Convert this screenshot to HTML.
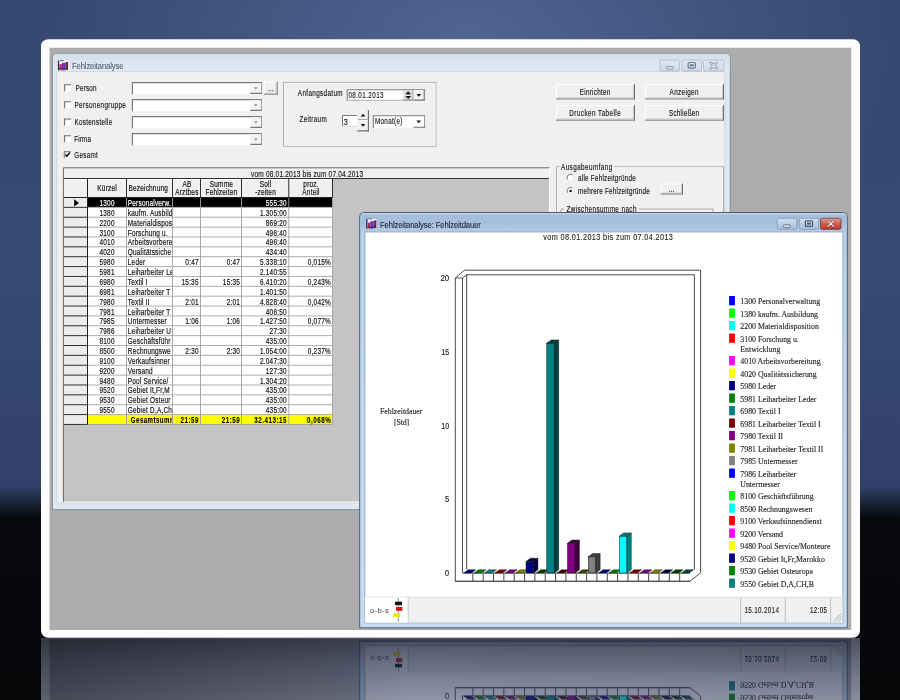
<!DOCTYPE html>
<html><head><meta charset="utf-8"><title>Fehlzeitanalyse</title>
<style>
html,body{margin:0;padding:0;width:900px;height:700px;overflow:hidden;background:#0a0b0f;font-family:"Liberation Sans",sans-serif;}
svg{display:block;will-change:transform;}

</style></head><body>
<svg width="900" height="700" viewBox="0 0 900 700">
<defs>
<linearGradient id="gBgV" x1="0" y1="0" x2="0" y2="1">
 <stop offset="0" stop-color="#36486f"/>
 <stop offset="0.4" stop-color="#384a72"/>
 <stop offset="0.695" stop-color="#31416a"/>
 <stop offset="0.74" stop-color="#08090d"/>
 <stop offset="1" stop-color="#060709"/>
</linearGradient>
<radialGradient id="gBgGlow" cx="470" cy="40" r="430" gradientUnits="userSpaceOnUse" gradientTransform="translate(470 40) scale(1 0.6) translate(-470 -40)">
 <stop offset="0" stop-color="#5a6e9e" stop-opacity="0.75"/>
 <stop offset="1" stop-color="#5a6e9e" stop-opacity="0"/>
</radialGradient>
<linearGradient id="gRefBg" x1="0" y1="0" x2="0" y2="1">
 <stop offset="0" stop-color="#1a1f2c"/>
 <stop offset="1" stop-color="#3a4258"/>
</linearGradient>
<linearGradient id="gRefFade" x1="0" y1="0" x2="0" y2="1">
 <stop offset="0" stop-color="#121a30" stop-opacity="0.6"/>
 <stop offset="0.4" stop-color="#1e2848" stop-opacity="0.45"/>
 <stop offset="1" stop-color="#2a3660" stop-opacity="0.26"/>
</linearGradient>
<linearGradient id="gRefH" x1="0" y1="0" x2="1" y2="0">
 <stop offset="0" stop-color="#000" stop-opacity="0.35"/>
 <stop offset="0.45" stop-color="#000" stop-opacity="0.0"/>
 <stop offset="1" stop-color="#000" stop-opacity="0.05"/>
</linearGradient>
<linearGradient id="gTitleI" x1="0" y1="0" x2="0" y2="1">
 <stop offset="0" stop-color="#d3dfec"/>
 <stop offset="1" stop-color="#e3ebf4"/>
</linearGradient>
<linearGradient id="gTitleA" x1="0" y1="0" x2="0" y2="1">
 <stop offset="0" stop-color="#c4d6ea"/>
 <stop offset="0.12" stop-color="#a6bfdb"/>
 <stop offset="0.5" stop-color="#a4bedb"/>
 <stop offset="1" stop-color="#b6cee8"/>
</linearGradient>
<linearGradient id="gFrameA" x1="0" y1="0" x2="0" y2="1">
 <stop offset="0" stop-color="#b8d0ea"/>
 <stop offset="0.5" stop-color="#c2d8ee"/>
 <stop offset="1" stop-color="#c8dcf0"/>
</linearGradient>
<linearGradient id="gBtnI" x1="0" y1="0" x2="0" y2="1">
 <stop offset="0" stop-color="#dfe7f0"/>
 <stop offset="1" stop-color="#cfdbe7"/>
</linearGradient>
<linearGradient id="gBtnA" x1="0" y1="0" x2="0" y2="1">
 <stop offset="0" stop-color="#d4e2f1"/>
 <stop offset="0.5" stop-color="#b9cde4"/>
 <stop offset="1" stop-color="#a9c1de"/>
</linearGradient>
<linearGradient id="gClose" x1="0" y1="0" x2="0" y2="1">
 <stop offset="0" stop-color="#e8a195"/>
 <stop offset="0.5" stop-color="#cf5c4d"/>
 <stop offset="1" stop-color="#c0392b"/>
</linearGradient>
<filter id="fBlur" x="0" y="0" width="1" height="1"><feGaussianBlur stdDeviation="0.7"/></filter>
<clipPath id="clipRef"><rect x="0" y="638.3" width="900" height="62"/></clipPath>
<clipPath id="clipPanel"><rect x="49.3" y="47.5" width="802.2" height="582.5"/></clipPath>
</defs>
<rect x="0" y="0" width="900" height="700" fill="url(#gBgV)"/>
<rect x="0" y="0" width="900" height="520" fill="url(#gBgGlow)"/>
<!-- reflection background -->
<rect x="41" y="638" width="819" height="62" fill="url(#gRefBg)"/>
<g clip-path="url(#clipRef)">
 <g transform="translate(0 1269) scale(1 -1)" opacity="0.62" filter="url(#fBlur)">
  <rect x="41" y="39.3" width="819" height="598.5" rx="7" fill="#fdfdfd"/>
  <use href="#content"/>
 </g>
 <rect x="41" y="638" width="819" height="62" fill="url(#gRefFade)"/>
 <rect x="41" y="638" width="819" height="62" fill="url(#gRefH)"/>
</g>
<!-- white frame -->
<rect x="41" y="39.3" width="819" height="598.5" rx="7" fill="#fdfdfd"/>
<g id="content" clip-path="url(#clipPanel)">
<rect x="49.30" y="47.50" width="802.20" height="582.50" fill="#acacac"/>
<path d="M52.5 509.6 V57.3 Q52.5 53.3 56.5 53.3 H726.2 Q730.2 53.3 730.2 57.3 V509.6 Z" fill="#dfe8f1" stroke="#7b8a99" stroke-width="0.9"/>
<rect x="53.1" y="53.9" width="676.5" height="18" rx="3.5" fill="url(#gTitleI)"/>
<rect x="57.20" y="71.80" width="667.20" height="430.80" fill="#f0f0f0"/>
<rect x="56.8" y="71.4" width="668" height="431.6" fill="none" stroke="#c9d4df" stroke-width="0.8"/>
<rect x="58.80" y="60.60" width="9.40" height="9.60" fill="#f4f4fa"/>
<rect x="57.90" y="60.50" width="1.30" height="10.00" fill="#28304e"/>
<rect x="60.00" y="60.10" width="3.80" height="1.00" fill="#5a6078"/>
<rect x="59.40" y="64.20" width="2.60" height="5.60" fill="#c42a5c"/>
<rect x="62.00" y="62.80" width="3.40" height="7.00" fill="#5a38e0"/>
<rect x="65.40" y="62.00" width="2.60" height="7.80" fill="#7a2a36"/>
<line x1="59.00" y1="68.90" x2="68.00" y2="68.90" stroke="#3a1a2a" stroke-width="0.9"/>
<rect x="60.50" y="69.60" width="5.00" height="0.90" fill="#6a6aa8"/>
<text transform="matrix(0.8600 0 0 1 72.00 68.60)" font-family="Liberation Sans" font-size="8.9" fill="#4a5a70" text-anchor="start" letter-spacing="-0.146" stroke="#4a5a70" stroke-width="0.06">Fehlzeitanalyse</text>
<rect x="660.00" y="60.00" width="19.5" height="11" rx="1.3" fill="url(#gBtnI)" stroke="#a9b8ca" stroke-width="0.8"/>
<rect x="666.25" y="66.70" width="7" height="2.3" rx="0.8" fill="#fff" stroke="#6c7a8c" stroke-width="0.9"/>
<rect x="682.00" y="60.00" width="19.5" height="11" rx="1.3" fill="url(#gBtnI)" stroke="#a9b8ca" stroke-width="0.8"/>
<rect x="688.15" y="62.50" width="7.2" height="5.6" rx="1" fill="none" stroke="#6c7a8c" stroke-width="1.2"/>
<rect x="689.75" y="64.30" width="4" height="2" fill="#6c7a8c"/>
<rect x="703.50" y="60.00" width="20.3" height="11" rx="1.3" fill="url(#gBtnI)" stroke="#a9b8ca" stroke-width="0.8"/>
<path d="M710.85 62.90 L716.45 68.10 M716.45 62.90 L710.85 68.10" stroke="#6a7a8e" stroke-width="2.4" stroke-linecap="round" opacity="0.95"/>
<path d="M710.85 62.90 L716.45 68.10 M716.45 62.90 L710.85 68.10" stroke="#f4f6f9" stroke-width="1.1" stroke-linecap="round"/>
<rect x="64.00" y="84.30" width="7.00" height="7.00" fill="#ffffff"/>
<path d="M64.50 91.30 V84.80 H71.00" stroke="#6e6e6e" stroke-width="1.1" fill="none"/>
<path d="M65.30 90.50 V85.60 H70.20" stroke="#d0d0d0" stroke-width="0.8" fill="none"/>
<text transform="matrix(0.7600 0 0 1 75.50 90.90)" font-family="Liberation Sans" font-size="8.3" fill="#111" text-anchor="start" letter-spacing="0.288" stroke="#111" stroke-width="0.13">Person</text>
<rect x="131.80" y="82.00" width="130.00" height="12.30" fill="#ffffff"/>
<path d="M132.40 94.30 V82.60 H261.80" stroke="#7a7a7a" stroke-width="1.2" fill="none"/>
<line x1="261.30" y1="82.00" x2="261.30" y2="93.70" stroke="#8a8a8a" stroke-width="1"/>
<rect x="250.30" y="83.20" width="10.50" height="10.10" fill="#f4f4f4"/>
<line x1="250.30" y1="93.40" x2="261.80" y2="93.40" stroke="#777" stroke-width="1.2"/>
<path d="M253.80 87.35 H257.80 L255.80 89.75 Z" fill="#9a9a9a"/>
<rect x="64.00" y="101.20" width="7.00" height="7.00" fill="#ffffff"/>
<path d="M64.50 108.20 V101.70 H71.00" stroke="#6e6e6e" stroke-width="1.1" fill="none"/>
<path d="M65.30 107.40 V102.50 H70.20" stroke="#d0d0d0" stroke-width="0.8" fill="none"/>
<text transform="matrix(0.7600 0 0 1 74.50 107.80)" font-family="Liberation Sans" font-size="8.3" fill="#111" text-anchor="start" letter-spacing="0.484" stroke="#111" stroke-width="0.13">Personengruppe</text>
<rect x="131.80" y="99.00" width="130.00" height="12.30" fill="#ffffff"/>
<path d="M132.40 111.30 V99.60 H261.80" stroke="#7a7a7a" stroke-width="1.2" fill="none"/>
<line x1="261.30" y1="99.00" x2="261.30" y2="110.70" stroke="#8a8a8a" stroke-width="1"/>
<rect x="250.30" y="100.20" width="10.50" height="10.10" fill="#f4f4f4"/>
<line x1="250.30" y1="110.40" x2="261.80" y2="110.40" stroke="#777" stroke-width="1.2"/>
<path d="M253.80 104.35 H257.80 L255.80 106.75 Z" fill="#9a9a9a"/>
<rect x="64.00" y="118.60" width="7.00" height="7.00" fill="#ffffff"/>
<path d="M64.50 125.60 V119.10 H71.00" stroke="#6e6e6e" stroke-width="1.1" fill="none"/>
<path d="M65.30 124.80 V119.90 H70.20" stroke="#d0d0d0" stroke-width="0.8" fill="none"/>
<text transform="matrix(0.7600 0 0 1 74.50 125.20)" font-family="Liberation Sans" font-size="8.3" fill="#111" text-anchor="start" letter-spacing="0.399" stroke="#111" stroke-width="0.13">Kostenstelle</text>
<rect x="131.80" y="116.00" width="130.00" height="12.30" fill="#ffffff"/>
<path d="M132.40 128.30 V116.60 H261.80" stroke="#7a7a7a" stroke-width="1.2" fill="none"/>
<line x1="261.30" y1="116.00" x2="261.30" y2="127.70" stroke="#8a8a8a" stroke-width="1"/>
<rect x="250.30" y="117.20" width="10.50" height="10.10" fill="#f4f4f4"/>
<line x1="250.30" y1="127.40" x2="261.80" y2="127.40" stroke="#777" stroke-width="1.2"/>
<path d="M253.80 121.35 H257.80 L255.80 123.75 Z" fill="#9a9a9a"/>
<rect x="64.00" y="135.30" width="7.00" height="7.00" fill="#ffffff"/>
<path d="M64.50 142.30 V135.80 H71.00" stroke="#6e6e6e" stroke-width="1.1" fill="none"/>
<path d="M65.30 141.50 V136.60 H70.20" stroke="#d0d0d0" stroke-width="0.8" fill="none"/>
<text transform="matrix(0.7600 0 0 1 74.20 141.90)" font-family="Liberation Sans" font-size="8.3" fill="#111" text-anchor="start" letter-spacing="0.232" stroke="#111" stroke-width="0.13">Firma</text>
<rect x="131.80" y="133.00" width="130.00" height="12.30" fill="#ffffff"/>
<path d="M132.40 145.30 V133.60 H261.80" stroke="#7a7a7a" stroke-width="1.2" fill="none"/>
<line x1="261.30" y1="133.00" x2="261.30" y2="144.70" stroke="#8a8a8a" stroke-width="1"/>
<rect x="250.30" y="134.20" width="10.50" height="10.10" fill="#f4f4f4"/>
<line x1="250.30" y1="144.40" x2="261.80" y2="144.40" stroke="#777" stroke-width="1.2"/>
<path d="M253.80 138.35 H257.80 L255.80 140.75 Z" fill="#9a9a9a"/>
<rect x="63.80" y="151.30" width="7.00" height="7.00" fill="#ffffff"/>
<path d="M64.30 158.30 V151.80 H70.80" stroke="#6e6e6e" stroke-width="1.1" fill="none"/>
<path d="M65.10 157.50 V152.60 H70.00" stroke="#d0d0d0" stroke-width="0.8" fill="none"/>
<path d="M65.30 154.50 L66.80 156.30 L70.00 152.50" stroke="#111" stroke-width="1.4" fill="none"/>
<text transform="matrix(0.7600 0 0 1 74.30 157.80)" font-family="Liberation Sans" font-size="8.3" fill="#111" text-anchor="start" letter-spacing="0.354" stroke="#111" stroke-width="0.13">Gesamt</text>
<rect x="264.00" y="81.50" width="13.70" height="13.20" fill="#f0f0f0"/>
<line x1="264.00" y1="82.00" x2="277.70" y2="82.00" stroke="#ffffff" stroke-width="1"/>
<line x1="264.50" y1="81.50" x2="264.50" y2="94.70" stroke="#ffffff" stroke-width="1"/>
<line x1="264.00" y1="94.20" x2="277.70" y2="94.20" stroke="#707070" stroke-width="1.0"/>
<line x1="277.20" y1="81.50" x2="277.20" y2="94.70" stroke="#707070" stroke-width="1.0"/>
<line x1="265.00" y1="93.20" x2="276.70" y2="93.20" stroke="#c4c4c4" stroke-width="0.9"/>
<line x1="276.20" y1="82.50" x2="276.20" y2="93.70" stroke="#c4c4c4" stroke-width="0.9"/>
<rect x="268.30" y="90.20" width="1.00" height="1.00" fill="#333"/>
<rect x="270.20" y="90.20" width="1.00" height="1.00" fill="#333"/>
<rect x="272.10" y="90.20" width="1.00" height="1.00" fill="#333"/>
<rect x="283.6" y="82.4" width="152.3" height="63.8" fill="none" stroke="#a0a0a0" stroke-width="0.9"/>
<rect x="284.4" y="83.2" width="150.7" height="62.2" fill="none" stroke="#fafafa" stroke-width="0.7"/>
<text transform="matrix(0.7600 0 0 1 297.80 96.20)" font-family="Liberation Sans" font-size="8.3" fill="#111" text-anchor="start" letter-spacing="0.496" stroke="#111" stroke-width="0.13">Anfangsdatum</text>
<rect x="346.70" y="89.20" width="78.20" height="11.40" fill="#ffffff"/>
<path d="M347.2 100.6 V89.7 H424.9" stroke="#7a7a7a" stroke-width="1.1" fill="none"/>
<path d="M346.7 100.3 H424.6 V89.2" stroke="#a8a8a8" stroke-width="0.9" fill="none"/>
<text transform="matrix(0.7600 0 0 1 348.40 98.20)" font-family="Liberation Sans" font-size="8.3" fill="#111" text-anchor="start" letter-spacing="0.530" stroke="#111" stroke-width="0.13">08.01.2013</text>
<rect x="403.00" y="90.00" width="10.30" height="10.00" fill="#dcdcdc"/>
<path d="M405.3 94.4 L408.2 91.2 L411.1 94.4 Z" fill="#111"/>
<path d="M405.3 95.9 L408.2 99.1 L411.1 95.9 Z" fill="#111"/>
<line x1="403.00" y1="95.15" x2="413.30" y2="95.15" stroke="#f4f4f4" stroke-width="0.8"/>
<line x1="413.00" y1="90.00" x2="413.00" y2="100.20" stroke="#8a8a8a" stroke-width="0.9"/>
<line x1="403.00" y1="99.90" x2="413.30" y2="99.90" stroke="#8a8a8a" stroke-width="0.9"/>
<rect x="413.60" y="90.00" width="10.80" height="10.00" fill="#f2f2f2"/>
<line x1="424.20" y1="89.50" x2="424.20" y2="100.40" stroke="#6e6e6e" stroke-width="1.0"/>
<line x1="413.60" y1="100.00" x2="424.60" y2="100.00" stroke="#6e6e6e" stroke-width="1.0"/>
<path d="M416.5 93.9 H421.1 L418.8 96.8 Z" fill="#111"/>
<text transform="matrix(0.7600 0 0 1 299.60 122.10)" font-family="Liberation Sans" font-size="8.3" fill="#111" text-anchor="start" letter-spacing="0.413" stroke="#111" stroke-width="0.13">Zeitraum</text>
<rect x="342.00" y="115.00" width="15.30" height="11.60" fill="#ffffff"/>
<path d="M342.5 126.6 V115.5 H357.3" stroke="#7a7a7a" stroke-width="1.1" fill="none"/>
<line x1="342.00" y1="126.20" x2="357.30" y2="126.20" stroke="#d0d0d0" stroke-width="0.8"/>
<text transform="matrix(0.9315 0 0 1 343.50 124.60)" font-family="Liberation Sans" font-size="8.3" fill="#111" text-anchor="start" stroke="#111" stroke-width="0.13">3</text>
<rect x="357.50" y="110.00" width="11.00" height="21.30" fill="#f0f0f0"/>
<line x1="368.40" y1="110.00" x2="368.40" y2="131.30" stroke="#6a6a6a" stroke-width="1.1"/>
<line x1="357.50" y1="130.90" x2="369.00" y2="130.90" stroke="#6a6a6a" stroke-width="1.1"/>
<line x1="358.00" y1="119.60" x2="368.00" y2="119.60" stroke="#9a9a9a" stroke-width="0.9"/>
<line x1="358.00" y1="120.60" x2="368.00" y2="120.60" stroke="#ffffff" stroke-width="0.7"/>
<path d="M360.7 116.6 L363 113.8 L365.3 116.6 Z" fill="#111"/>
<path d="M360.7 124 L363 126.8 L365.3 124 Z" fill="#111"/>
<rect x="372.80" y="115.30" width="52.20" height="12.40" fill="#ffffff"/>
<path d="M373.3 127.7 V115.8 H425" stroke="#7a7a7a" stroke-width="1.1" fill="none"/>
<line x1="424.60" y1="115.30" x2="424.60" y2="127.70" stroke="#8a8a8a" stroke-width="0.9"/>
<line x1="413.50" y1="127.20" x2="425.00" y2="127.20" stroke="#6a6a6a" stroke-width="1.1"/>
<text transform="matrix(0.7600 0 0 1 375.00 124.30)" font-family="Liberation Sans" font-size="8.3" fill="#111" text-anchor="start" letter-spacing="0.404" stroke="#111" stroke-width="0.13">Monat(e)</text>
<path d="M416.4 120.6 H421 L418.7 123.2 Z" fill="#111"/>
<rect x="556.00" y="84.00" width="79.00" height="15.40" fill="#f0f0f0"/>
<line x1="556.00" y1="84.50" x2="635.00" y2="84.50" stroke="#ffffff" stroke-width="1"/>
<line x1="556.50" y1="84.00" x2="556.50" y2="99.40" stroke="#ffffff" stroke-width="1"/>
<line x1="556.00" y1="98.90" x2="635.00" y2="98.90" stroke="#707070" stroke-width="1.0"/>
<line x1="634.50" y1="84.00" x2="634.50" y2="99.40" stroke="#707070" stroke-width="1.0"/>
<line x1="557.00" y1="97.90" x2="634.00" y2="97.90" stroke="#c4c4c4" stroke-width="0.9"/>
<line x1="633.50" y1="85.00" x2="633.50" y2="98.40" stroke="#c4c4c4" stroke-width="0.9"/>
<text transform="matrix(0.7600 0 0 1 595.13 94.70)" font-family="Liberation Sans" font-size="8.3" fill="#111" text-anchor="middle" letter-spacing="0.335" stroke="#111" stroke-width="0.13">Einrichten</text>
<rect x="556.00" y="105.00" width="79.00" height="15.60" fill="#f0f0f0"/>
<line x1="556.00" y1="105.50" x2="635.00" y2="105.50" stroke="#ffffff" stroke-width="1"/>
<line x1="556.50" y1="105.00" x2="556.50" y2="120.60" stroke="#ffffff" stroke-width="1"/>
<line x1="556.00" y1="120.10" x2="635.00" y2="120.10" stroke="#707070" stroke-width="1.0"/>
<line x1="634.50" y1="105.00" x2="634.50" y2="120.60" stroke="#707070" stroke-width="1.0"/>
<line x1="557.00" y1="119.10" x2="634.00" y2="119.10" stroke="#c4c4c4" stroke-width="0.9"/>
<line x1="633.50" y1="106.00" x2="633.50" y2="119.60" stroke="#c4c4c4" stroke-width="0.9"/>
<text transform="matrix(0.7600 0 0 1 595.23 115.80)" font-family="Liberation Sans" font-size="8.3" fill="#111" text-anchor="middle" letter-spacing="0.604" stroke="#111" stroke-width="0.13">Drucken Tabelle</text>
<rect x="645.00" y="84.00" width="79.00" height="15.40" fill="#f0f0f0"/>
<line x1="645.00" y1="84.50" x2="724.00" y2="84.50" stroke="#ffffff" stroke-width="1"/>
<line x1="645.50" y1="84.00" x2="645.50" y2="99.40" stroke="#ffffff" stroke-width="1"/>
<line x1="645.00" y1="98.90" x2="724.00" y2="98.90" stroke="#707070" stroke-width="1.0"/>
<line x1="723.50" y1="84.00" x2="723.50" y2="99.40" stroke="#707070" stroke-width="1.0"/>
<line x1="646.00" y1="97.90" x2="723.00" y2="97.90" stroke="#c4c4c4" stroke-width="0.9"/>
<line x1="722.50" y1="85.00" x2="722.50" y2="98.40" stroke="#c4c4c4" stroke-width="0.9"/>
<text transform="matrix(0.7600 0 0 1 684.18 94.70)" font-family="Liberation Sans" font-size="8.3" fill="#111" text-anchor="middle" letter-spacing="0.476" stroke="#111" stroke-width="0.13">Anzeigen</text>
<rect x="645.00" y="105.00" width="79.00" height="15.60" fill="#f0f0f0"/>
<line x1="645.00" y1="105.50" x2="724.00" y2="105.50" stroke="#ffffff" stroke-width="1"/>
<line x1="645.50" y1="105.00" x2="645.50" y2="120.60" stroke="#ffffff" stroke-width="1"/>
<line x1="645.00" y1="120.10" x2="724.00" y2="120.10" stroke="#707070" stroke-width="1.0"/>
<line x1="723.50" y1="105.00" x2="723.50" y2="120.60" stroke="#707070" stroke-width="1.0"/>
<line x1="646.00" y1="119.10" x2="723.00" y2="119.10" stroke="#c4c4c4" stroke-width="0.9"/>
<line x1="722.50" y1="106.00" x2="722.50" y2="119.60" stroke="#c4c4c4" stroke-width="0.9"/>
<text transform="matrix(0.7600 0 0 1 684.13 115.80)" font-family="Liberation Sans" font-size="8.3" fill="#111" text-anchor="middle" letter-spacing="0.343" stroke="#111" stroke-width="0.13">Schließen</text>
<path d="M560 166.8 H556.6 V520 M614 166.8 H723.6 V520" stroke="#a0a0a0" stroke-width="0.9" fill="none"/>
<path d="M557.5 520 V167.6 H560 M614 167.6 H722.7" stroke="#fafafa" stroke-width="0.7" fill="none"/>
<text transform="matrix(0.7600 0 0 1 561.00 169.80)" font-family="Liberation Sans" font-size="8.3" fill="#111" text-anchor="start" letter-spacing="0.593" stroke="#111" stroke-width="0.13">Ausgabeumfang</text>
<circle cx="570.4" cy="177.6" r="3.4" fill="#fff" stroke="#e4e4e4" stroke-width="0.8"/>
<path d="M567.6 179.4 A3.4 3.4 0 0 1 572.4 174.79999999999998" stroke="#6a6a6a" stroke-width="0.9" fill="none"/>
<circle cx="570.4" cy="190.9" r="3.4" fill="#fff" stroke="#e4e4e4" stroke-width="0.8"/>
<path d="M567.6 192.70000000000002 A3.4 3.4 0 0 1 572.4 188.1" stroke="#6a6a6a" stroke-width="0.9" fill="none"/>
<circle cx="570.6" cy="191.0" r="1.3" fill="#111"/>
<text transform="matrix(0.7600 0 0 1 578.00 180.80)" font-family="Liberation Sans" font-size="8.3" fill="#111" text-anchor="start" letter-spacing="0.325" stroke="#111" stroke-width="0.13">alle Fehlzeitgründe</text>
<text transform="matrix(0.7600 0 0 1 578.00 194.20)" font-family="Liberation Sans" font-size="8.3" fill="#111" text-anchor="start" letter-spacing="0.301" stroke="#111" stroke-width="0.13">mehrere Fehlzeitgründe</text>
<rect x="660.70" y="183.50" width="22.30" height="11.00" fill="#f0f0f0"/>
<line x1="660.70" y1="184.00" x2="683.00" y2="184.00" stroke="#ffffff" stroke-width="1"/>
<line x1="661.20" y1="183.50" x2="661.20" y2="194.50" stroke="#ffffff" stroke-width="1"/>
<line x1="660.70" y1="194.00" x2="683.00" y2="194.00" stroke="#707070" stroke-width="1.0"/>
<line x1="682.50" y1="183.50" x2="682.50" y2="194.50" stroke="#707070" stroke-width="1.0"/>
<line x1="661.70" y1="193.00" x2="682.00" y2="193.00" stroke="#c4c4c4" stroke-width="0.9"/>
<line x1="681.50" y1="184.50" x2="681.50" y2="193.50" stroke="#c4c4c4" stroke-width="0.9"/>
<rect x="669.00" y="190.80" width="1.00" height="1.00" fill="#333"/>
<rect x="671.00" y="190.80" width="1.00" height="1.00" fill="#333"/>
<rect x="673.00" y="190.80" width="1.00" height="1.00" fill="#333"/>
<path d="M564 209 H561 V240 M639 209 H713 V240" stroke="#a0a0a0" stroke-width="0.9" fill="none"/>
<text transform="matrix(0.7600 0 0 1 566.40 211.60)" font-family="Liberation Sans" font-size="8.3" fill="#111" text-anchor="start" letter-spacing="0.573" stroke="#111" stroke-width="0.13">Zwischensumme nach</text>
<rect x="63.40" y="167.80" width="486.60" height="334.80" fill="#c4c4c4"/>
<rect x="63.40" y="167.80" width="486.60" height="10.70" fill="#f0f0f0"/>
<text transform="matrix(0.7600 0 0 1 307.10 176.60)" font-family="Liberation Sans" font-size="8.6" fill="#111" text-anchor="middle" letter-spacing="0.270" stroke="#111" stroke-width="0.13">vom 08.01.2013 bis zum 07.04.2013</text>
<rect x="63.40" y="178.50" width="269.10" height="19.00" fill="#f0f0f0"/>
<text transform="matrix(0.7000 0 0 1 107.11 190.80)" font-family="Liberation Sans" font-size="9.2" fill="#111" text-anchor="middle" letter-spacing="0.300" stroke="#111" stroke-width="0.2">Kürzel</text>
<text transform="matrix(0.7000 0 0 1 128.50 190.80)" font-family="Liberation Sans" font-size="9.2" fill="#111" text-anchor="start" letter-spacing="0.300" stroke="#111" stroke-width="0.2">Bezeichnung</text>
<text transform="matrix(0.7000 0 0 1 186.91 187.10)" font-family="Liberation Sans" font-size="9.2" fill="#111" text-anchor="middle" letter-spacing="0.300" stroke="#111" stroke-width="0.2">AB</text>
<text transform="matrix(0.7000 0 0 1 186.91 195.30)" font-family="Liberation Sans" font-size="9.2" fill="#111" text-anchor="middle" letter-spacing="0.300" stroke="#111" stroke-width="0.2">Arztbes</text>
<text transform="matrix(0.7000 0 0 1 221.41 187.10)" font-family="Liberation Sans" font-size="9.2" fill="#111" text-anchor="middle" letter-spacing="0.300" stroke="#111" stroke-width="0.2">Summe</text>
<text transform="matrix(0.7000 0 0 1 221.41 195.30)" font-family="Liberation Sans" font-size="9.2" fill="#111" text-anchor="middle" letter-spacing="0.300" stroke="#111" stroke-width="0.2">Fehlzeiten</text>
<text transform="matrix(0.7000 0 0 1 265.53 187.10)" font-family="Liberation Sans" font-size="9.2" fill="#111" text-anchor="middle" letter-spacing="0.300" stroke="#111" stroke-width="0.2">Soll</text>
<text transform="matrix(0.7000 0 0 1 265.53 195.30)" font-family="Liberation Sans" font-size="9.2" fill="#111" text-anchor="middle" letter-spacing="0.300" stroke="#111" stroke-width="0.2">-zeiten</text>
<text transform="matrix(0.7000 0 0 1 311.03 187.10)" font-family="Liberation Sans" font-size="9.2" fill="#111" text-anchor="middle" letter-spacing="0.300" stroke="#111" stroke-width="0.2">proz.</text>
<text transform="matrix(0.7000 0 0 1 311.03 195.30)" font-family="Liberation Sans" font-size="9.2" fill="#111" text-anchor="middle" letter-spacing="0.300" stroke="#111" stroke-width="0.2">Anteil</text>
<rect x="63.40" y="197.50" width="24.10" height="9.87" fill="#ececec"/>
<rect x="87.50" y="197.50" width="245.00" height="9.87" fill="#000"/>
<rect x="63.40" y="207.37" width="24.10" height="9.87" fill="#ececec"/>
<rect x="87.50" y="207.37" width="245.00" height="9.87" fill="#ffffff"/>
<rect x="63.40" y="217.23" width="24.10" height="9.87" fill="#ececec"/>
<rect x="87.50" y="217.23" width="245.00" height="9.87" fill="#ffffff"/>
<rect x="63.40" y="227.10" width="24.10" height="9.87" fill="#ececec"/>
<rect x="87.50" y="227.10" width="245.00" height="9.87" fill="#ffffff"/>
<rect x="63.40" y="236.97" width="24.10" height="9.87" fill="#ececec"/>
<rect x="87.50" y="236.97" width="245.00" height="9.87" fill="#ffffff"/>
<rect x="63.40" y="246.84" width="24.10" height="9.87" fill="#ececec"/>
<rect x="87.50" y="246.84" width="245.00" height="9.87" fill="#ffffff"/>
<rect x="63.40" y="256.70" width="24.10" height="9.87" fill="#ececec"/>
<rect x="87.50" y="256.70" width="245.00" height="9.87" fill="#ffffff"/>
<rect x="63.40" y="266.57" width="24.10" height="9.87" fill="#ececec"/>
<rect x="87.50" y="266.57" width="245.00" height="9.87" fill="#ffffff"/>
<rect x="63.40" y="276.44" width="24.10" height="9.87" fill="#ececec"/>
<rect x="87.50" y="276.44" width="245.00" height="9.87" fill="#ffffff"/>
<rect x="63.40" y="286.30" width="24.10" height="9.87" fill="#ececec"/>
<rect x="87.50" y="286.30" width="245.00" height="9.87" fill="#ffffff"/>
<rect x="63.40" y="296.17" width="24.10" height="9.87" fill="#ececec"/>
<rect x="87.50" y="296.17" width="245.00" height="9.87" fill="#ffffff"/>
<rect x="63.40" y="306.04" width="24.10" height="9.87" fill="#ececec"/>
<rect x="87.50" y="306.04" width="245.00" height="9.87" fill="#ffffff"/>
<rect x="63.40" y="315.90" width="24.10" height="9.87" fill="#ececec"/>
<rect x="87.50" y="315.90" width="245.00" height="9.87" fill="#ffffff"/>
<rect x="63.40" y="325.77" width="24.10" height="9.87" fill="#ececec"/>
<rect x="87.50" y="325.77" width="245.00" height="9.87" fill="#ffffff"/>
<rect x="63.40" y="335.64" width="24.10" height="9.87" fill="#ececec"/>
<rect x="87.50" y="335.64" width="245.00" height="9.87" fill="#ffffff"/>
<rect x="63.40" y="345.50" width="24.10" height="9.87" fill="#ececec"/>
<rect x="87.50" y="345.50" width="245.00" height="9.87" fill="#ffffff"/>
<rect x="63.40" y="355.37" width="24.10" height="9.87" fill="#ececec"/>
<rect x="87.50" y="355.37" width="245.00" height="9.87" fill="#ffffff"/>
<rect x="63.40" y="365.24" width="24.10" height="9.87" fill="#ececec"/>
<rect x="87.50" y="365.24" width="245.00" height="9.87" fill="#ffffff"/>
<rect x="63.40" y="375.11" width="24.10" height="9.87" fill="#ececec"/>
<rect x="87.50" y="375.11" width="245.00" height="9.87" fill="#ffffff"/>
<rect x="63.40" y="384.97" width="24.10" height="9.87" fill="#ececec"/>
<rect x="87.50" y="384.97" width="245.00" height="9.87" fill="#ffffff"/>
<rect x="63.40" y="394.84" width="24.10" height="9.87" fill="#ececec"/>
<rect x="87.50" y="394.84" width="245.00" height="9.87" fill="#ffffff"/>
<rect x="63.40" y="404.71" width="24.10" height="9.87" fill="#ececec"/>
<rect x="87.50" y="404.71" width="245.00" height="9.87" fill="#ffffff"/>
<rect x="63.40" y="414.57" width="24.10" height="9.87" fill="#ececec"/>
<rect x="87.50" y="414.57" width="245.00" height="9.87" fill="#ffff00"/>
<line x1="87.50" y1="207.37" x2="332.50" y2="207.37" stroke="#a8a8a8" stroke-width="0.9"/>
<line x1="87.50" y1="217.23" x2="332.50" y2="217.23" stroke="#a8a8a8" stroke-width="0.9"/>
<line x1="87.50" y1="227.10" x2="332.50" y2="227.10" stroke="#a8a8a8" stroke-width="0.9"/>
<line x1="87.50" y1="236.97" x2="332.50" y2="236.97" stroke="#a8a8a8" stroke-width="0.9"/>
<line x1="87.50" y1="246.84" x2="332.50" y2="246.84" stroke="#a8a8a8" stroke-width="0.9"/>
<line x1="87.50" y1="256.70" x2="332.50" y2="256.70" stroke="#a8a8a8" stroke-width="0.9"/>
<line x1="87.50" y1="266.57" x2="332.50" y2="266.57" stroke="#a8a8a8" stroke-width="0.9"/>
<line x1="87.50" y1="276.44" x2="332.50" y2="276.44" stroke="#a8a8a8" stroke-width="0.9"/>
<line x1="87.50" y1="286.30" x2="332.50" y2="286.30" stroke="#a8a8a8" stroke-width="0.9"/>
<line x1="87.50" y1="296.17" x2="332.50" y2="296.17" stroke="#a8a8a8" stroke-width="0.9"/>
<line x1="87.50" y1="306.04" x2="332.50" y2="306.04" stroke="#a8a8a8" stroke-width="0.9"/>
<line x1="87.50" y1="315.90" x2="332.50" y2="315.90" stroke="#a8a8a8" stroke-width="0.9"/>
<line x1="87.50" y1="325.77" x2="332.50" y2="325.77" stroke="#a8a8a8" stroke-width="0.9"/>
<line x1="87.50" y1="335.64" x2="332.50" y2="335.64" stroke="#a8a8a8" stroke-width="0.9"/>
<line x1="87.50" y1="345.50" x2="332.50" y2="345.50" stroke="#a8a8a8" stroke-width="0.9"/>
<line x1="87.50" y1="355.37" x2="332.50" y2="355.37" stroke="#a8a8a8" stroke-width="0.9"/>
<line x1="87.50" y1="365.24" x2="332.50" y2="365.24" stroke="#a8a8a8" stroke-width="0.9"/>
<line x1="87.50" y1="375.11" x2="332.50" y2="375.11" stroke="#a8a8a8" stroke-width="0.9"/>
<line x1="87.50" y1="384.97" x2="332.50" y2="384.97" stroke="#a8a8a8" stroke-width="0.9"/>
<line x1="87.50" y1="394.84" x2="332.50" y2="394.84" stroke="#a8a8a8" stroke-width="0.9"/>
<line x1="87.50" y1="404.71" x2="332.50" y2="404.71" stroke="#a8a8a8" stroke-width="0.9"/>
<line x1="87.50" y1="414.57" x2="332.50" y2="414.57" stroke="#a8a8a8" stroke-width="0.9"/>
<line x1="63.40" y1="197.50" x2="87.50" y2="197.50" stroke="#303030" stroke-width="1.0"/>
<line x1="63.40" y1="207.37" x2="87.50" y2="207.37" stroke="#303030" stroke-width="1.0"/>
<line x1="63.40" y1="217.23" x2="87.50" y2="217.23" stroke="#303030" stroke-width="1.0"/>
<line x1="63.40" y1="227.10" x2="87.50" y2="227.10" stroke="#303030" stroke-width="1.0"/>
<line x1="63.40" y1="236.97" x2="87.50" y2="236.97" stroke="#303030" stroke-width="1.0"/>
<line x1="63.40" y1="246.84" x2="87.50" y2="246.84" stroke="#303030" stroke-width="1.0"/>
<line x1="63.40" y1="256.70" x2="87.50" y2="256.70" stroke="#303030" stroke-width="1.0"/>
<line x1="63.40" y1="266.57" x2="87.50" y2="266.57" stroke="#303030" stroke-width="1.0"/>
<line x1="63.40" y1="276.44" x2="87.50" y2="276.44" stroke="#303030" stroke-width="1.0"/>
<line x1="63.40" y1="286.30" x2="87.50" y2="286.30" stroke="#303030" stroke-width="1.0"/>
<line x1="63.40" y1="296.17" x2="87.50" y2="296.17" stroke="#303030" stroke-width="1.0"/>
<line x1="63.40" y1="306.04" x2="87.50" y2="306.04" stroke="#303030" stroke-width="1.0"/>
<line x1="63.40" y1="315.90" x2="87.50" y2="315.90" stroke="#303030" stroke-width="1.0"/>
<line x1="63.40" y1="325.77" x2="87.50" y2="325.77" stroke="#303030" stroke-width="1.0"/>
<line x1="63.40" y1="335.64" x2="87.50" y2="335.64" stroke="#303030" stroke-width="1.0"/>
<line x1="63.40" y1="345.50" x2="87.50" y2="345.50" stroke="#303030" stroke-width="1.0"/>
<line x1="63.40" y1="355.37" x2="87.50" y2="355.37" stroke="#303030" stroke-width="1.0"/>
<line x1="63.40" y1="365.24" x2="87.50" y2="365.24" stroke="#303030" stroke-width="1.0"/>
<line x1="63.40" y1="375.11" x2="87.50" y2="375.11" stroke="#303030" stroke-width="1.0"/>
<line x1="63.40" y1="384.97" x2="87.50" y2="384.97" stroke="#303030" stroke-width="1.0"/>
<line x1="63.40" y1="394.84" x2="87.50" y2="394.84" stroke="#303030" stroke-width="1.0"/>
<line x1="63.40" y1="404.71" x2="87.50" y2="404.71" stroke="#303030" stroke-width="1.0"/>
<line x1="63.40" y1="414.57" x2="87.50" y2="414.57" stroke="#303030" stroke-width="1.0"/>
<line x1="63.40" y1="424.44" x2="87.50" y2="424.44" stroke="#303030" stroke-width="1.0"/>
<line x1="87.50" y1="424.44" x2="332.50" y2="424.44" stroke="#9a9a9a" stroke-width="0.9"/>
<line x1="126.50" y1="197.50" x2="126.50" y2="424.44" stroke="#a0a0a0" stroke-width="0.9"/>
<line x1="172.50" y1="197.50" x2="172.50" y2="424.44" stroke="#a0a0a0" stroke-width="0.9"/>
<line x1="200.50" y1="197.50" x2="200.50" y2="424.44" stroke="#a0a0a0" stroke-width="0.9"/>
<line x1="241.50" y1="197.50" x2="241.50" y2="424.44" stroke="#a0a0a0" stroke-width="0.9"/>
<line x1="288.75" y1="197.50" x2="288.75" y2="424.44" stroke="#a0a0a0" stroke-width="0.9"/>
<line x1="332.50" y1="197.50" x2="332.50" y2="424.44" stroke="#a0a0a0" stroke-width="0.9"/>
<line x1="87.50" y1="178.50" x2="87.50" y2="424.44" stroke="#202020" stroke-width="1.0"/>
<line x1="126.50" y1="178.50" x2="126.50" y2="197.50" stroke="#303030" stroke-width="1.0"/>
<line x1="172.50" y1="178.50" x2="172.50" y2="197.50" stroke="#303030" stroke-width="1.0"/>
<line x1="200.50" y1="178.50" x2="200.50" y2="197.50" stroke="#303030" stroke-width="1.0"/>
<line x1="241.50" y1="178.50" x2="241.50" y2="197.50" stroke="#303030" stroke-width="1.0"/>
<line x1="288.75" y1="178.50" x2="288.75" y2="197.50" stroke="#303030" stroke-width="1.0"/>
<line x1="332.50" y1="178.50" x2="332.50" y2="197.50" stroke="#303030" stroke-width="1.0"/>
<line x1="63.40" y1="197.50" x2="332.50" y2="197.50" stroke="#202020" stroke-width="1.1"/>
<line x1="63.40" y1="178.50" x2="550.00" y2="178.50" stroke="#303030" stroke-width="1.0"/>
<line x1="64.50" y1="179.60" x2="86.50" y2="179.60" stroke="#ffffff" stroke-width="0.8"/>
<line x1="88.50" y1="179.60" x2="125.50" y2="179.60" stroke="#ffffff" stroke-width="0.8"/>
<line x1="127.50" y1="179.60" x2="171.50" y2="179.60" stroke="#ffffff" stroke-width="0.8"/>
<line x1="173.50" y1="179.60" x2="199.50" y2="179.60" stroke="#ffffff" stroke-width="0.8"/>
<line x1="201.50" y1="179.60" x2="240.50" y2="179.60" stroke="#ffffff" stroke-width="0.8"/>
<line x1="242.50" y1="179.60" x2="287.75" y2="179.60" stroke="#ffffff" stroke-width="0.8"/>
<line x1="289.75" y1="179.60" x2="331.50" y2="179.60" stroke="#ffffff" stroke-width="0.8"/>
<path d="M74.2 199.30 L79 202.90 L74.2 206.50 Z" fill="#000"/>
<text transform="matrix(0.7000 0 0 1 107.11 206.00)" font-family="Liberation Sans" font-size="9.2" fill="#fff" text-anchor="middle" letter-spacing="0.300" stroke="#fff" stroke-width="0.2">1300</text>
<clipPath id="cb0"><rect x="126.5" y="197.0" width="45.5" height="11"/></clipPath>
<g clip-path="url(#cb0)">
<text transform="matrix(0.7000 0 0 1 127.80 206.00)" font-family="Liberation Sans" font-size="9.2" fill="#fff" text-anchor="start" letter-spacing="0.300" stroke="#fff" stroke-width="0.2">Personalverw.</text>
</g>
<text transform="matrix(0.7000 0 0 1 286.76 206.00)" font-family="Liberation Sans" font-size="9.2" fill="#fff" text-anchor="end" letter-spacing="0.300" stroke="#fff" stroke-width="0.2">555:30</text>
<text transform="matrix(0.7000 0 0 1 107.11 215.87)" font-family="Liberation Sans" font-size="9.2" fill="#111" text-anchor="middle" letter-spacing="0.300" stroke="#111" stroke-width="0.2">1380</text>
<clipPath id="cb1"><rect x="126.5" y="206.867" width="45.5" height="11"/></clipPath>
<g clip-path="url(#cb1)">
<text transform="matrix(0.7000 0 0 1 127.80 215.87)" font-family="Liberation Sans" font-size="9.2" fill="#111" text-anchor="start" letter-spacing="0.300" stroke="#111" stroke-width="0.2">kaufm. Ausbild</text>
</g>
<text transform="matrix(0.7000 0 0 1 286.76 215.87)" font-family="Liberation Sans" font-size="9.2" fill="#111" text-anchor="end" letter-spacing="0.300" stroke="#111" stroke-width="0.2">1.305:00</text>
<text transform="matrix(0.7000 0 0 1 107.11 225.73)" font-family="Liberation Sans" font-size="9.2" fill="#111" text-anchor="middle" letter-spacing="0.300" stroke="#111" stroke-width="0.2">2200</text>
<clipPath id="cb2"><rect x="126.5" y="216.734" width="45.5" height="11"/></clipPath>
<g clip-path="url(#cb2)">
<text transform="matrix(0.7000 0 0 1 127.80 225.73)" font-family="Liberation Sans" font-size="9.2" fill="#111" text-anchor="start" letter-spacing="0.300" stroke="#111" stroke-width="0.2">Materialdispos</text>
</g>
<text transform="matrix(0.7000 0 0 1 286.76 225.73)" font-family="Liberation Sans" font-size="9.2" fill="#111" text-anchor="end" letter-spacing="0.300" stroke="#111" stroke-width="0.2">869:20</text>
<text transform="matrix(0.7000 0 0 1 107.11 235.60)" font-family="Liberation Sans" font-size="9.2" fill="#111" text-anchor="middle" letter-spacing="0.300" stroke="#111" stroke-width="0.2">3100</text>
<clipPath id="cb3"><rect x="126.5" y="226.601" width="45.5" height="11"/></clipPath>
<g clip-path="url(#cb3)">
<text transform="matrix(0.7000 0 0 1 127.80 235.60)" font-family="Liberation Sans" font-size="9.2" fill="#111" text-anchor="start" letter-spacing="0.300" stroke="#111" stroke-width="0.2">Forschung u.</text>
</g>
<text transform="matrix(0.7000 0 0 1 286.76 235.60)" font-family="Liberation Sans" font-size="9.2" fill="#111" text-anchor="end" letter-spacing="0.300" stroke="#111" stroke-width="0.2">496:40</text>
<text transform="matrix(0.7000 0 0 1 107.11 245.47)" font-family="Liberation Sans" font-size="9.2" fill="#111" text-anchor="middle" letter-spacing="0.300" stroke="#111" stroke-width="0.2">4010</text>
<clipPath id="cb4"><rect x="126.5" y="236.46800000000002" width="45.5" height="11"/></clipPath>
<g clip-path="url(#cb4)">
<text transform="matrix(0.7000 0 0 1 127.80 245.47)" font-family="Liberation Sans" font-size="9.2" fill="#111" text-anchor="start" letter-spacing="0.300" stroke="#111" stroke-width="0.2">Arbeitsvorbere</text>
</g>
<text transform="matrix(0.7000 0 0 1 286.76 245.47)" font-family="Liberation Sans" font-size="9.2" fill="#111" text-anchor="end" letter-spacing="0.300" stroke="#111" stroke-width="0.2">496:40</text>
<text transform="matrix(0.7000 0 0 1 107.11 255.34)" font-family="Liberation Sans" font-size="9.2" fill="#111" text-anchor="middle" letter-spacing="0.300" stroke="#111" stroke-width="0.2">4020</text>
<clipPath id="cb5"><rect x="126.5" y="246.335" width="45.5" height="11"/></clipPath>
<g clip-path="url(#cb5)">
<text transform="matrix(0.7000 0 0 1 127.80 255.34)" font-family="Liberation Sans" font-size="9.2" fill="#111" text-anchor="start" letter-spacing="0.300" stroke="#111" stroke-width="0.2">Qualitätssiche</text>
</g>
<text transform="matrix(0.7000 0 0 1 286.76 255.34)" font-family="Liberation Sans" font-size="9.2" fill="#111" text-anchor="end" letter-spacing="0.300" stroke="#111" stroke-width="0.2">434:40</text>
<text transform="matrix(0.7000 0 0 1 107.11 265.20)" font-family="Liberation Sans" font-size="9.2" fill="#111" text-anchor="middle" letter-spacing="0.300" stroke="#111" stroke-width="0.2">5980</text>
<clipPath id="cb6"><rect x="126.5" y="256.202" width="45.5" height="11"/></clipPath>
<g clip-path="url(#cb6)">
<text transform="matrix(0.7000 0 0 1 127.80 265.20)" font-family="Liberation Sans" font-size="9.2" fill="#111" text-anchor="start" letter-spacing="0.300" stroke="#111" stroke-width="0.2">Leder</text>
</g>
<text transform="matrix(0.7000 0 0 1 198.71 265.20)" font-family="Liberation Sans" font-size="9.2" fill="#111" text-anchor="end" letter-spacing="0.300" stroke="#111" stroke-width="0.2">0:47</text>
<text transform="matrix(0.7000 0 0 1 240.01 265.20)" font-family="Liberation Sans" font-size="9.2" fill="#111" text-anchor="end" letter-spacing="0.300" stroke="#111" stroke-width="0.2">0:47</text>
<text transform="matrix(0.7000 0 0 1 286.76 265.20)" font-family="Liberation Sans" font-size="9.2" fill="#111" text-anchor="end" letter-spacing="0.300" stroke="#111" stroke-width="0.2">5.338:10</text>
<text transform="matrix(0.7000 0 0 1 330.91 265.20)" font-family="Liberation Sans" font-size="9.2" fill="#111" text-anchor="end" letter-spacing="0.300" stroke="#111" stroke-width="0.2">0,015%</text>
<text transform="matrix(0.7000 0 0 1 107.11 275.07)" font-family="Liberation Sans" font-size="9.2" fill="#111" text-anchor="middle" letter-spacing="0.300" stroke="#111" stroke-width="0.2">5981</text>
<clipPath id="cb7"><rect x="126.5" y="266.069" width="45.5" height="11"/></clipPath>
<g clip-path="url(#cb7)">
<text transform="matrix(0.7000 0 0 1 127.80 275.07)" font-family="Liberation Sans" font-size="9.2" fill="#111" text-anchor="start" letter-spacing="0.300" stroke="#111" stroke-width="0.2">Leiharbeiter Le</text>
</g>
<text transform="matrix(0.7000 0 0 1 286.76 275.07)" font-family="Liberation Sans" font-size="9.2" fill="#111" text-anchor="end" letter-spacing="0.300" stroke="#111" stroke-width="0.2">2.140:55</text>
<text transform="matrix(0.7000 0 0 1 107.11 284.94)" font-family="Liberation Sans" font-size="9.2" fill="#111" text-anchor="middle" letter-spacing="0.300" stroke="#111" stroke-width="0.2">6980</text>
<clipPath id="cb8"><rect x="126.5" y="275.93600000000004" width="45.5" height="11"/></clipPath>
<g clip-path="url(#cb8)">
<text transform="matrix(0.7000 0 0 1 127.80 284.94)" font-family="Liberation Sans" font-size="9.2" fill="#111" text-anchor="start" letter-spacing="0.300" stroke="#111" stroke-width="0.2">Textil I</text>
</g>
<text transform="matrix(0.7000 0 0 1 198.71 284.94)" font-family="Liberation Sans" font-size="9.2" fill="#111" text-anchor="end" letter-spacing="0.300" stroke="#111" stroke-width="0.2">15:35</text>
<text transform="matrix(0.7000 0 0 1 240.01 284.94)" font-family="Liberation Sans" font-size="9.2" fill="#111" text-anchor="end" letter-spacing="0.300" stroke="#111" stroke-width="0.2">15:35</text>
<text transform="matrix(0.7000 0 0 1 286.76 284.94)" font-family="Liberation Sans" font-size="9.2" fill="#111" text-anchor="end" letter-spacing="0.300" stroke="#111" stroke-width="0.2">6.410:20</text>
<text transform="matrix(0.7000 0 0 1 330.91 284.94)" font-family="Liberation Sans" font-size="9.2" fill="#111" text-anchor="end" letter-spacing="0.300" stroke="#111" stroke-width="0.2">0,243%</text>
<text transform="matrix(0.7000 0 0 1 107.11 294.80)" font-family="Liberation Sans" font-size="9.2" fill="#111" text-anchor="middle" letter-spacing="0.300" stroke="#111" stroke-width="0.2">6981</text>
<clipPath id="cb9"><rect x="126.5" y="285.803" width="45.5" height="11"/></clipPath>
<g clip-path="url(#cb9)">
<text transform="matrix(0.7000 0 0 1 127.80 294.80)" font-family="Liberation Sans" font-size="9.2" fill="#111" text-anchor="start" letter-spacing="0.300" stroke="#111" stroke-width="0.2">Leiharbeiter T</text>
</g>
<text transform="matrix(0.7000 0 0 1 286.76 294.80)" font-family="Liberation Sans" font-size="9.2" fill="#111" text-anchor="end" letter-spacing="0.300" stroke="#111" stroke-width="0.2">1.401:50</text>
<text transform="matrix(0.7000 0 0 1 107.11 304.67)" font-family="Liberation Sans" font-size="9.2" fill="#111" text-anchor="middle" letter-spacing="0.300" stroke="#111" stroke-width="0.2">7980</text>
<clipPath id="cb10"><rect x="126.5" y="295.67" width="45.5" height="11"/></clipPath>
<g clip-path="url(#cb10)">
<text transform="matrix(0.7000 0 0 1 127.80 304.67)" font-family="Liberation Sans" font-size="9.2" fill="#111" text-anchor="start" letter-spacing="0.300" stroke="#111" stroke-width="0.2">Textil II</text>
</g>
<text transform="matrix(0.7000 0 0 1 198.71 304.67)" font-family="Liberation Sans" font-size="9.2" fill="#111" text-anchor="end" letter-spacing="0.300" stroke="#111" stroke-width="0.2">2:01</text>
<text transform="matrix(0.7000 0 0 1 240.01 304.67)" font-family="Liberation Sans" font-size="9.2" fill="#111" text-anchor="end" letter-spacing="0.300" stroke="#111" stroke-width="0.2">2:01</text>
<text transform="matrix(0.7000 0 0 1 286.76 304.67)" font-family="Liberation Sans" font-size="9.2" fill="#111" text-anchor="end" letter-spacing="0.300" stroke="#111" stroke-width="0.2">4.828:40</text>
<text transform="matrix(0.7000 0 0 1 330.91 304.67)" font-family="Liberation Sans" font-size="9.2" fill="#111" text-anchor="end" letter-spacing="0.300" stroke="#111" stroke-width="0.2">0,042%</text>
<text transform="matrix(0.7000 0 0 1 107.11 314.54)" font-family="Liberation Sans" font-size="9.2" fill="#111" text-anchor="middle" letter-spacing="0.300" stroke="#111" stroke-width="0.2">7981</text>
<clipPath id="cb11"><rect x="126.5" y="305.53700000000003" width="45.5" height="11"/></clipPath>
<g clip-path="url(#cb11)">
<text transform="matrix(0.7000 0 0 1 127.80 314.54)" font-family="Liberation Sans" font-size="9.2" fill="#111" text-anchor="start" letter-spacing="0.300" stroke="#111" stroke-width="0.2">Leiharbeiter T</text>
</g>
<text transform="matrix(0.7000 0 0 1 286.76 314.54)" font-family="Liberation Sans" font-size="9.2" fill="#111" text-anchor="end" letter-spacing="0.300" stroke="#111" stroke-width="0.2">406:50</text>
<text transform="matrix(0.7000 0 0 1 107.11 324.40)" font-family="Liberation Sans" font-size="9.2" fill="#111" text-anchor="middle" letter-spacing="0.300" stroke="#111" stroke-width="0.2">7985</text>
<clipPath id="cb12"><rect x="126.5" y="315.404" width="45.5" height="11"/></clipPath>
<g clip-path="url(#cb12)">
<text transform="matrix(0.7000 0 0 1 127.80 324.40)" font-family="Liberation Sans" font-size="9.2" fill="#111" text-anchor="start" letter-spacing="0.300" stroke="#111" stroke-width="0.2">Untermesser</text>
</g>
<text transform="matrix(0.7000 0 0 1 198.71 324.40)" font-family="Liberation Sans" font-size="9.2" fill="#111" text-anchor="end" letter-spacing="0.300" stroke="#111" stroke-width="0.2">1:06</text>
<text transform="matrix(0.7000 0 0 1 240.01 324.40)" font-family="Liberation Sans" font-size="9.2" fill="#111" text-anchor="end" letter-spacing="0.300" stroke="#111" stroke-width="0.2">1:06</text>
<text transform="matrix(0.7000 0 0 1 286.76 324.40)" font-family="Liberation Sans" font-size="9.2" fill="#111" text-anchor="end" letter-spacing="0.300" stroke="#111" stroke-width="0.2">1.427:50</text>
<text transform="matrix(0.7000 0 0 1 330.91 324.40)" font-family="Liberation Sans" font-size="9.2" fill="#111" text-anchor="end" letter-spacing="0.300" stroke="#111" stroke-width="0.2">0,077%</text>
<text transform="matrix(0.7000 0 0 1 107.11 334.27)" font-family="Liberation Sans" font-size="9.2" fill="#111" text-anchor="middle" letter-spacing="0.300" stroke="#111" stroke-width="0.2">7986</text>
<clipPath id="cb13"><rect x="126.5" y="325.271" width="45.5" height="11"/></clipPath>
<g clip-path="url(#cb13)">
<text transform="matrix(0.7000 0 0 1 127.80 334.27)" font-family="Liberation Sans" font-size="9.2" fill="#111" text-anchor="start" letter-spacing="0.300" stroke="#111" stroke-width="0.2">Leiharbeiter U</text>
</g>
<text transform="matrix(0.7000 0 0 1 286.76 334.27)" font-family="Liberation Sans" font-size="9.2" fill="#111" text-anchor="end" letter-spacing="0.300" stroke="#111" stroke-width="0.2">27:30</text>
<text transform="matrix(0.7000 0 0 1 107.11 344.14)" font-family="Liberation Sans" font-size="9.2" fill="#111" text-anchor="middle" letter-spacing="0.300" stroke="#111" stroke-width="0.2">8100</text>
<clipPath id="cb14"><rect x="126.5" y="335.13800000000003" width="45.5" height="11"/></clipPath>
<g clip-path="url(#cb14)">
<text transform="matrix(0.7000 0 0 1 127.80 344.14)" font-family="Liberation Sans" font-size="9.2" fill="#111" text-anchor="start" letter-spacing="0.300" stroke="#111" stroke-width="0.2">Geschäftsführ</text>
</g>
<text transform="matrix(0.7000 0 0 1 286.76 344.14)" font-family="Liberation Sans" font-size="9.2" fill="#111" text-anchor="end" letter-spacing="0.300" stroke="#111" stroke-width="0.2">435:00</text>
<text transform="matrix(0.7000 0 0 1 107.11 354.00)" font-family="Liberation Sans" font-size="9.2" fill="#111" text-anchor="middle" letter-spacing="0.300" stroke="#111" stroke-width="0.2">8500</text>
<clipPath id="cb15"><rect x="126.5" y="345.005" width="45.5" height="11"/></clipPath>
<g clip-path="url(#cb15)">
<text transform="matrix(0.7000 0 0 1 127.80 354.00)" font-family="Liberation Sans" font-size="9.2" fill="#111" text-anchor="start" letter-spacing="0.300" stroke="#111" stroke-width="0.2">Rechnungswe</text>
</g>
<text transform="matrix(0.7000 0 0 1 198.71 354.00)" font-family="Liberation Sans" font-size="9.2" fill="#111" text-anchor="end" letter-spacing="0.300" stroke="#111" stroke-width="0.2">2:30</text>
<text transform="matrix(0.7000 0 0 1 240.01 354.00)" font-family="Liberation Sans" font-size="9.2" fill="#111" text-anchor="end" letter-spacing="0.300" stroke="#111" stroke-width="0.2">2:30</text>
<text transform="matrix(0.7000 0 0 1 286.76 354.00)" font-family="Liberation Sans" font-size="9.2" fill="#111" text-anchor="end" letter-spacing="0.300" stroke="#111" stroke-width="0.2">1.054:00</text>
<text transform="matrix(0.7000 0 0 1 330.91 354.00)" font-family="Liberation Sans" font-size="9.2" fill="#111" text-anchor="end" letter-spacing="0.300" stroke="#111" stroke-width="0.2">0,237%</text>
<text transform="matrix(0.7000 0 0 1 107.11 363.87)" font-family="Liberation Sans" font-size="9.2" fill="#111" text-anchor="middle" letter-spacing="0.300" stroke="#111" stroke-width="0.2">9100</text>
<clipPath id="cb16"><rect x="126.5" y="354.872" width="45.5" height="11"/></clipPath>
<g clip-path="url(#cb16)">
<text transform="matrix(0.7000 0 0 1 127.80 363.87)" font-family="Liberation Sans" font-size="9.2" fill="#111" text-anchor="start" letter-spacing="0.300" stroke="#111" stroke-width="0.2">Verkaufsinner</text>
</g>
<text transform="matrix(0.7000 0 0 1 286.76 363.87)" font-family="Liberation Sans" font-size="9.2" fill="#111" text-anchor="end" letter-spacing="0.300" stroke="#111" stroke-width="0.2">2.047:30</text>
<text transform="matrix(0.7000 0 0 1 107.11 373.74)" font-family="Liberation Sans" font-size="9.2" fill="#111" text-anchor="middle" letter-spacing="0.300" stroke="#111" stroke-width="0.2">9200</text>
<clipPath id="cb17"><rect x="126.5" y="364.73900000000003" width="45.5" height="11"/></clipPath>
<g clip-path="url(#cb17)">
<text transform="matrix(0.7000 0 0 1 127.80 373.74)" font-family="Liberation Sans" font-size="9.2" fill="#111" text-anchor="start" letter-spacing="0.300" stroke="#111" stroke-width="0.2">Versand</text>
</g>
<text transform="matrix(0.7000 0 0 1 286.76 373.74)" font-family="Liberation Sans" font-size="9.2" fill="#111" text-anchor="end" letter-spacing="0.300" stroke="#111" stroke-width="0.2">127:30</text>
<text transform="matrix(0.7000 0 0 1 107.11 383.61)" font-family="Liberation Sans" font-size="9.2" fill="#111" text-anchor="middle" letter-spacing="0.300" stroke="#111" stroke-width="0.2">9480</text>
<clipPath id="cb18"><rect x="126.5" y="374.606" width="45.5" height="11"/></clipPath>
<g clip-path="url(#cb18)">
<text transform="matrix(0.7000 0 0 1 127.80 383.61)" font-family="Liberation Sans" font-size="9.2" fill="#111" text-anchor="start" letter-spacing="0.300" stroke="#111" stroke-width="0.2">Pool Service/</text>
</g>
<text transform="matrix(0.7000 0 0 1 286.76 383.61)" font-family="Liberation Sans" font-size="9.2" fill="#111" text-anchor="end" letter-spacing="0.300" stroke="#111" stroke-width="0.2">1.304:20</text>
<text transform="matrix(0.7000 0 0 1 107.11 393.47)" font-family="Liberation Sans" font-size="9.2" fill="#111" text-anchor="middle" letter-spacing="0.300" stroke="#111" stroke-width="0.2">9520</text>
<clipPath id="cb19"><rect x="126.5" y="384.473" width="45.5" height="11"/></clipPath>
<g clip-path="url(#cb19)">
<text transform="matrix(0.7000 0 0 1 127.80 393.47)" font-family="Liberation Sans" font-size="9.2" fill="#111" text-anchor="start" letter-spacing="0.300" stroke="#111" stroke-width="0.2">Gebiet It,Fr,M</text>
</g>
<text transform="matrix(0.7000 0 0 1 286.76 393.47)" font-family="Liberation Sans" font-size="9.2" fill="#111" text-anchor="end" letter-spacing="0.300" stroke="#111" stroke-width="0.2">435:00</text>
<text transform="matrix(0.7000 0 0 1 107.11 403.34)" font-family="Liberation Sans" font-size="9.2" fill="#111" text-anchor="middle" letter-spacing="0.300" stroke="#111" stroke-width="0.2">9530</text>
<clipPath id="cb20"><rect x="126.5" y="394.34000000000003" width="45.5" height="11"/></clipPath>
<g clip-path="url(#cb20)">
<text transform="matrix(0.7000 0 0 1 127.80 403.34)" font-family="Liberation Sans" font-size="9.2" fill="#111" text-anchor="start" letter-spacing="0.300" stroke="#111" stroke-width="0.2">Gebiet Osteur</text>
</g>
<text transform="matrix(0.7000 0 0 1 286.76 403.34)" font-family="Liberation Sans" font-size="9.2" fill="#111" text-anchor="end" letter-spacing="0.300" stroke="#111" stroke-width="0.2">435:00</text>
<text transform="matrix(0.7000 0 0 1 107.11 413.21)" font-family="Liberation Sans" font-size="9.2" fill="#111" text-anchor="middle" letter-spacing="0.300" stroke="#111" stroke-width="0.2">9550</text>
<clipPath id="cb21"><rect x="126.5" y="404.207" width="45.5" height="11"/></clipPath>
<g clip-path="url(#cb21)">
<text transform="matrix(0.7000 0 0 1 127.80 413.21)" font-family="Liberation Sans" font-size="9.2" fill="#111" text-anchor="start" letter-spacing="0.300" stroke="#111" stroke-width="0.2">Gebiet D,A,Ch</text>
</g>
<text transform="matrix(0.7000 0 0 1 286.76 413.21)" font-family="Liberation Sans" font-size="9.2" fill="#111" text-anchor="end" letter-spacing="0.300" stroke="#111" stroke-width="0.2">435:00</text>
<clipPath id="cbg"><rect x="126.5" y="414.074" width="45.5" height="11"/></clipPath>
<g clip-path="url(#cbg)">
<text transform="matrix(0.6600 0 0 1 130.80 423.07)" font-family="Liberation Sans" font-size="9.2" fill="#000" text-anchor="start" font-weight="bold" letter-spacing="0.750" stroke="#000" stroke-width="0.13">Gesamtsumme</text>
</g>
<text transform="matrix(0.6800 0 0 1 199.01 423.07)" font-family="Liberation Sans" font-size="9.2" fill="#000" text-anchor="end" font-weight="bold" letter-spacing="0.750" stroke="#000" stroke-width="0.13">21:59</text>
<text transform="matrix(0.6800 0 0 1 240.31 423.07)" font-family="Liberation Sans" font-size="9.2" fill="#000" text-anchor="end" font-weight="bold" letter-spacing="0.750" stroke="#000" stroke-width="0.13">21:59</text>
<text transform="matrix(0.6800 0 0 1 287.06 423.07)" font-family="Liberation Sans" font-size="9.2" fill="#000" text-anchor="end" font-weight="bold" letter-spacing="0.750" stroke="#000" stroke-width="0.13">32.413:15</text>
<text transform="matrix(0.6800 0 0 1 331.21 423.07)" font-family="Liberation Sans" font-size="9.2" fill="#000" text-anchor="end" font-weight="bold" letter-spacing="0.750" stroke="#000" stroke-width="0.13">0,068%</text>
<path d="M63.4 502.6 V167.8 H550" stroke="#6a6a6a" stroke-width="1" fill="none"/>
<path d="M63.4 502.1 H549.5 V167.8" stroke="#ffffff" stroke-width="1" fill="none"/>
<path d="M359.7 627.8 V216.5 Q359.7 212.5 363.7 212.5 H843.3 Q847.3 212.5 847.3 216.5 V627.8 Z" fill="url(#gFrameA)" stroke="#3d5566" stroke-width="0.9"/>
<rect x="360.3" y="213.1" width="486.4" height="19" rx="3.5" fill="url(#gTitleA)"/>
<rect x="365.30" y="232.30" width="477.20" height="390.30" fill="#ffffff"/>
<rect x="364.9" y="231.9" width="478" height="391" fill="none" stroke="#8fa9c4" stroke-width="0.8"/>
<rect x="367.10" y="218.90" width="9.40" height="9.60" fill="#f4f4fa"/>
<rect x="366.20" y="218.80" width="1.30" height="10.00" fill="#28304e"/>
<rect x="368.30" y="218.40" width="3.80" height="1.00" fill="#5a6078"/>
<rect x="367.70" y="222.50" width="2.60" height="5.60" fill="#c42a5c"/>
<rect x="370.30" y="221.10" width="3.40" height="7.00" fill="#5a38e0"/>
<rect x="373.70" y="220.30" width="2.60" height="7.80" fill="#7a2a36"/>
<line x1="367.30" y1="227.20" x2="376.30" y2="227.20" stroke="#3a1a2a" stroke-width="0.9"/>
<rect x="368.80" y="227.90" width="5.00" height="0.90" fill="#6a6aa8"/>
<text transform="matrix(0.8600 0 0 1 380.00 227.60)" font-family="Liberation Sans" font-size="8.9" fill="#1a2333" text-anchor="start" letter-spacing="-0.117" stroke="#1a2333" stroke-width="0.1">Fehlzeitanalyse: Fehlzeitdauer</text>
<rect x="777.20" y="218.30" width="19.5" height="11" rx="1.3" fill="url(#gBtnA)" stroke="#7f95b3" stroke-width="0.8"/>
<rect x="783.45" y="225.00" width="7" height="2.3" rx="0.8" fill="#fff" stroke="#4a5a70" stroke-width="0.9"/>
<rect x="799.20" y="218.30" width="19.5" height="11" rx="1.3" fill="url(#gBtnA)" stroke="#7f95b3" stroke-width="0.8"/>
<rect x="805.35" y="220.80" width="7.2" height="5.6" rx="1" fill="none" stroke="#4a5a70" stroke-width="1.2"/>
<rect x="806.95" y="222.60" width="4" height="2" fill="#4a5a70"/>
<rect x="820.70" y="218.30" width="20.3" height="11" rx="1.3" fill="url(#gClose)" stroke="#6e3a36" stroke-width="0.8"/>
<path d="M828.05 221.20 L833.65 226.40 M833.65 221.20 L828.05 226.40" stroke="#5a2a26" stroke-width="2.4" stroke-linecap="round" opacity="0.55"/>
<path d="M828.05 221.20 L833.65 226.40 M833.65 221.20 L828.05 226.40" stroke="#fff" stroke-width="1.1" stroke-linecap="round"/>
<text transform="matrix(0.8600 0 0 1 543.30 240.40)" font-family="Liberation Sans" font-size="8.5" fill="#222" text-anchor="start" letter-spacing="0.424" stroke="#222" stroke-width="0.1">vom 08.01.2013 bis zum 07.04.2013</text>
<text transform="matrix(0.9500 0 0 1 449.01 281.00)" font-family="Liberation Sans" font-size="8.3" fill="#222" text-anchor="end" letter-spacing="-0.195" stroke="#222" stroke-width="0.15">20</text>
<text transform="matrix(0.8665 0 0 1 449.20 354.75)" font-family="Liberation Sans" font-size="8.3" fill="#222" text-anchor="end" stroke="#222" stroke-width="0.15">15</text>
<text transform="matrix(0.8665 0 0 1 449.20 428.50)" font-family="Liberation Sans" font-size="8.3" fill="#222" text-anchor="end" stroke="#222" stroke-width="0.15">10</text>
<text transform="matrix(0.9315 0 0 1 449.20 502.25)" font-family="Liberation Sans" font-size="8.3" fill="#222" text-anchor="end" stroke="#222" stroke-width="0.15">5</text>
<text transform="matrix(0.8882 0 0 1 449.20 576.00)" font-family="Liberation Sans" font-size="8.3" fill="#222" text-anchor="end" stroke="#222" stroke-width="0.15">0</text>
<text transform="matrix(0.9000 0 0 1 401.17 414.10)" font-family="Liberation Serif" font-size="8.8" fill="#222" text-anchor="middle" letter-spacing="-0.060" stroke="#222" stroke-width="0.12">Fehlzeitdauer</text>
<text transform="matrix(0.9000 0 0 1 401.43 424.80)" font-family="Liberation Serif" font-size="8.8" fill="#222" text-anchor="middle" letter-spacing="-0.165" stroke="#222" stroke-width="0.12">[Std]</text>
<path d="M455.3 581.3 V278 L464.4 270.2 H700.6 V572.8 L690 581.3 Z" fill="#fff" stroke="#4a4a4a" stroke-width="1" fill="none"/>
<path d="M462.5 573 V278 M455.3 278 H462.5 L466.7 274.8 H694.4 V569.6 M466.7 274.8 V569.4" stroke="#4a4a4a" stroke-width="1" fill="none"/>
<path d="M462.5 573.1 H690 M455.3 581.3 H690" stroke="#4a4a4a" stroke-width="1" fill="none"/>
<line x1="472.84" y1="573.10" x2="472.84" y2="581.30" stroke="#4a4a4a" stroke-width="1"/>
<line x1="483.18" y1="573.10" x2="483.18" y2="581.30" stroke="#4a4a4a" stroke-width="1"/>
<line x1="493.52" y1="573.10" x2="493.52" y2="581.30" stroke="#4a4a4a" stroke-width="1"/>
<line x1="503.86" y1="573.10" x2="503.86" y2="581.30" stroke="#4a4a4a" stroke-width="1"/>
<line x1="514.20" y1="573.10" x2="514.20" y2="581.30" stroke="#4a4a4a" stroke-width="1"/>
<line x1="524.55" y1="573.10" x2="524.55" y2="581.30" stroke="#4a4a4a" stroke-width="1"/>
<line x1="534.89" y1="573.10" x2="534.89" y2="581.30" stroke="#4a4a4a" stroke-width="1"/>
<line x1="545.23" y1="573.10" x2="545.23" y2="581.30" stroke="#4a4a4a" stroke-width="1"/>
<line x1="555.57" y1="573.10" x2="555.57" y2="581.30" stroke="#4a4a4a" stroke-width="1"/>
<line x1="565.91" y1="573.10" x2="565.91" y2="581.30" stroke="#4a4a4a" stroke-width="1"/>
<line x1="576.25" y1="573.10" x2="576.25" y2="581.30" stroke="#4a4a4a" stroke-width="1"/>
<line x1="586.59" y1="573.10" x2="586.59" y2="581.30" stroke="#4a4a4a" stroke-width="1"/>
<line x1="596.93" y1="573.10" x2="596.93" y2="581.30" stroke="#4a4a4a" stroke-width="1"/>
<line x1="607.27" y1="573.10" x2="607.27" y2="581.30" stroke="#4a4a4a" stroke-width="1"/>
<line x1="617.61" y1="573.10" x2="617.61" y2="581.30" stroke="#4a4a4a" stroke-width="1"/>
<line x1="627.95" y1="573.10" x2="627.95" y2="581.30" stroke="#4a4a4a" stroke-width="1"/>
<line x1="638.30" y1="573.10" x2="638.30" y2="581.30" stroke="#4a4a4a" stroke-width="1"/>
<line x1="648.64" y1="573.10" x2="648.64" y2="581.30" stroke="#4a4a4a" stroke-width="1"/>
<line x1="658.98" y1="573.10" x2="658.98" y2="581.30" stroke="#4a4a4a" stroke-width="1"/>
<line x1="669.32" y1="573.10" x2="669.32" y2="581.30" stroke="#4a4a4a" stroke-width="1"/>
<line x1="679.66" y1="573.10" x2="679.66" y2="581.30" stroke="#4a4a4a" stroke-width="1"/>
<path d="M463.80 573.00 L468.10 569.80 H475.70 L471.40 573.00 Z" fill="#00007f" stroke="#222" stroke-width="0.5"/>
<path d="M474.17 573.00 L478.47 569.80 H486.07 L481.77 573.00 Z" fill="#007f00" stroke="#222" stroke-width="0.5"/>
<path d="M484.54 573.00 L488.84 569.80 H496.44 L492.14 573.00 Z" fill="#007f7f" stroke="#222" stroke-width="0.5"/>
<path d="M494.91 573.00 L499.21 569.80 H506.81 L502.51 573.00 Z" fill="#7f0000" stroke="#222" stroke-width="0.5"/>
<path d="M505.28 573.00 L509.58 569.80 H517.18 L512.88 573.00 Z" fill="#7f007f" stroke="#222" stroke-width="0.5"/>
<path d="M515.65 573.00 L519.95 569.80 H527.55 L523.25 573.00 Z" fill="#7f7f00" stroke="#222" stroke-width="0.5"/>
<rect x="526.02" y="561.45" width="7.6" height="11.55" fill="#000080" stroke="#111" stroke-width="0.5"/>
<path d="M533.62 561.45 L537.92 558.25 V569.80 L533.62 573 Z" fill="#000040" stroke="#111" stroke-width="0.5"/>
<path d="M526.02 561.45 L530.32 558.25 H537.92 L533.62 561.45 Z" fill="#000040" stroke="#222" stroke-width="0.5"/>
<path d="M536.39 573.00 L540.69 569.80 H548.29 L543.99 573.00 Z" fill="#004000" stroke="#222" stroke-width="0.5"/>
<rect x="546.76" y="343.15" width="7.6" height="229.85" fill="#008080" stroke="#111" stroke-width="0.5"/>
<path d="M554.36 343.15 L558.66 339.95 V569.80 L554.36 573 Z" fill="#004040" stroke="#111" stroke-width="0.5"/>
<path d="M546.76 343.15 L551.06 339.95 H558.66 L554.36 343.15 Z" fill="#004040" stroke="#222" stroke-width="0.5"/>
<path d="M557.13 573.00 L561.43 569.80 H569.03 L564.73 573.00 Z" fill="#400000" stroke="#222" stroke-width="0.5"/>
<rect x="567.50" y="543.25" width="7.6" height="29.75" fill="#800080" stroke="#111" stroke-width="0.5"/>
<path d="M575.10 543.25 L579.40 540.05 V569.80 L575.10 573 Z" fill="#400040" stroke="#111" stroke-width="0.5"/>
<path d="M567.50 543.25 L571.80 540.05 H579.40 L575.10 543.25 Z" fill="#400040" stroke="#222" stroke-width="0.5"/>
<path d="M577.87 573.00 L582.17 569.80 H589.77 L585.47 573.00 Z" fill="#404000" stroke="#222" stroke-width="0.5"/>
<rect x="588.24" y="556.77" width="7.6" height="16.23" fill="#808080" stroke="#111" stroke-width="0.5"/>
<path d="M595.84 556.77 L600.14 553.57 V569.80 L595.84 573 Z" fill="#404040" stroke="#111" stroke-width="0.5"/>
<path d="M588.24 556.77 L592.54 553.57 H600.14 L595.84 556.77 Z" fill="#404040" stroke="#222" stroke-width="0.5"/>
<path d="M598.61 573.00 L602.91 569.80 H610.51 L606.21 573.00 Z" fill="#00007f" stroke="#222" stroke-width="0.5"/>
<path d="M608.98 573.00 L613.28 569.80 H620.88 L616.58 573.00 Z" fill="#007f00" stroke="#222" stroke-width="0.5"/>
<rect x="619.35" y="536.12" width="7.6" height="36.88" fill="#00ffff" stroke="#111" stroke-width="0.5"/>
<path d="M626.95 536.12 L631.25 532.92 V569.80 L626.95 573 Z" fill="#007f7f" stroke="#111" stroke-width="0.5"/>
<path d="M619.35 536.12 L623.65 532.92 H631.25 L626.95 536.12 Z" fill="#007f7f" stroke="#222" stroke-width="0.5"/>
<path d="M629.72 573.00 L634.02 569.80 H641.62 L637.32 573.00 Z" fill="#7f0000" stroke="#222" stroke-width="0.5"/>
<path d="M640.09 573.00 L644.39 569.80 H651.99 L647.69 573.00 Z" fill="#7f007f" stroke="#222" stroke-width="0.5"/>
<path d="M650.46 573.00 L654.76 569.80 H662.36 L658.06 573.00 Z" fill="#7f7f00" stroke="#222" stroke-width="0.5"/>
<path d="M660.83 573.00 L665.13 569.80 H672.73 L668.43 573.00 Z" fill="#000040" stroke="#222" stroke-width="0.5"/>
<path d="M671.20 573.00 L675.50 569.80 H683.10 L678.80 573.00 Z" fill="#004000" stroke="#222" stroke-width="0.5"/>
<path d="M681.57 573.00 L685.87 569.80 H693.47 L689.17 573.00 Z" fill="#004040" stroke="#222" stroke-width="0.5"/>
<rect x="729.10" y="296.00" width="5.80" height="9.30" fill="#0000ff"/>
<text transform="matrix(0.9120 0 0 1 740.30 304.30)" font-family="Liberation Serif" font-size="8.6" fill="#222" text-anchor="start" stroke="#222" stroke-width="0.12">1300 Personalverwaltung</text>
<rect x="729.10" y="308.50" width="5.80" height="9.30" fill="#00ff00"/>
<text transform="matrix(0.9120 0 0 1 740.30 316.80)" font-family="Liberation Serif" font-size="8.6" fill="#222" text-anchor="start" stroke="#222" stroke-width="0.12">1380 kaufm. Ausbildung</text>
<rect x="729.10" y="321.00" width="5.80" height="9.30" fill="#00ffff"/>
<text transform="matrix(0.9120 0 0 1 740.30 329.30)" font-family="Liberation Serif" font-size="8.6" fill="#222" text-anchor="start" stroke="#222" stroke-width="0.12">2200 Materialdisposition</text>
<rect x="729.10" y="333.50" width="5.80" height="9.30" fill="#ff0000"/>
<text transform="matrix(0.9120 0 0 1 740.30 341.80)" font-family="Liberation Serif" font-size="8.6" fill="#222" text-anchor="start" stroke="#222" stroke-width="0.12">3100 Forschung u.</text>
<text transform="matrix(0.9120 0 0 1 740.30 351.80)" font-family="Liberation Serif" font-size="8.6" fill="#222" text-anchor="start" stroke="#222" stroke-width="0.12">Entwicklung</text>
<rect x="729.10" y="356.00" width="5.80" height="9.30" fill="#ff00ff"/>
<text transform="matrix(0.9120 0 0 1 740.30 364.30)" font-family="Liberation Serif" font-size="8.6" fill="#222" text-anchor="start" stroke="#222" stroke-width="0.12">4010 Arbeitsvorbereitung</text>
<rect x="729.10" y="368.50" width="5.80" height="9.30" fill="#ffff00"/>
<text transform="matrix(0.9120 0 0 1 740.30 376.80)" font-family="Liberation Serif" font-size="8.6" fill="#222" text-anchor="start" stroke="#222" stroke-width="0.12">4020 Qualitätssicherung</text>
<rect x="729.10" y="381.00" width="5.80" height="9.30" fill="#000080"/>
<text transform="matrix(0.9120 0 0 1 740.30 389.30)" font-family="Liberation Serif" font-size="8.6" fill="#222" text-anchor="start" stroke="#222" stroke-width="0.12">5980 Leder</text>
<rect x="729.10" y="393.50" width="5.80" height="9.30" fill="#008000"/>
<text transform="matrix(0.9120 0 0 1 740.30 401.80)" font-family="Liberation Serif" font-size="8.6" fill="#222" text-anchor="start" stroke="#222" stroke-width="0.12">5981 Leiharbeiter Leder</text>
<rect x="729.10" y="406.00" width="5.80" height="9.30" fill="#008080"/>
<text transform="matrix(0.9120 0 0 1 740.30 414.30)" font-family="Liberation Serif" font-size="8.6" fill="#222" text-anchor="start" stroke="#222" stroke-width="0.12">6980 Textil I</text>
<rect x="729.10" y="418.50" width="5.80" height="9.30" fill="#800000"/>
<text transform="matrix(0.9120 0 0 1 740.30 426.80)" font-family="Liberation Serif" font-size="8.6" fill="#222" text-anchor="start" stroke="#222" stroke-width="0.12">6981 Leiharbeiter Textil I</text>
<rect x="729.10" y="431.00" width="5.80" height="9.30" fill="#800080"/>
<text transform="matrix(0.9120 0 0 1 740.30 439.30)" font-family="Liberation Serif" font-size="8.6" fill="#222" text-anchor="start" stroke="#222" stroke-width="0.12">7980 Textil II</text>
<rect x="729.10" y="443.50" width="5.80" height="9.30" fill="#808000"/>
<text transform="matrix(0.9120 0 0 1 740.30 451.80)" font-family="Liberation Serif" font-size="8.6" fill="#222" text-anchor="start" stroke="#222" stroke-width="0.12">7981 Leiharbeiter Textil II</text>
<rect x="729.10" y="456.00" width="5.80" height="9.30" fill="#808080"/>
<text transform="matrix(0.9120 0 0 1 740.30 464.30)" font-family="Liberation Serif" font-size="8.6" fill="#222" text-anchor="start" stroke="#222" stroke-width="0.12">7985 Untermesser</text>
<rect x="729.10" y="468.50" width="5.80" height="9.30" fill="#0000ff"/>
<text transform="matrix(0.9120 0 0 1 740.30 476.80)" font-family="Liberation Serif" font-size="8.6" fill="#222" text-anchor="start" stroke="#222" stroke-width="0.12">7986 Leiharbeiter</text>
<text transform="matrix(0.9120 0 0 1 740.30 486.80)" font-family="Liberation Serif" font-size="8.6" fill="#222" text-anchor="start" stroke="#222" stroke-width="0.12">Untermesser</text>
<rect x="729.10" y="491.00" width="5.80" height="9.30" fill="#00ff00"/>
<text transform="matrix(0.9120 0 0 1 740.30 499.30)" font-family="Liberation Serif" font-size="8.6" fill="#222" text-anchor="start" stroke="#222" stroke-width="0.12">8100 Geschäftsführung</text>
<rect x="729.10" y="503.50" width="5.80" height="9.30" fill="#00ffff"/>
<text transform="matrix(0.9120 0 0 1 740.30 511.80)" font-family="Liberation Serif" font-size="8.6" fill="#222" text-anchor="start" stroke="#222" stroke-width="0.12">8500 Rechnungswesen</text>
<rect x="729.10" y="516.00" width="5.80" height="9.30" fill="#ff0000"/>
<text transform="matrix(0.9120 0 0 1 740.30 524.30)" font-family="Liberation Serif" font-size="8.6" fill="#222" text-anchor="start" stroke="#222" stroke-width="0.12">9100 Verkaufsinnendienst</text>
<rect x="729.10" y="528.50" width="5.80" height="9.30" fill="#ff00ff"/>
<text transform="matrix(0.9120 0 0 1 740.30 536.80)" font-family="Liberation Serif" font-size="8.6" fill="#222" text-anchor="start" stroke="#222" stroke-width="0.12">9200 Versand</text>
<rect x="729.10" y="541.00" width="5.80" height="9.30" fill="#ffff00"/>
<text transform="matrix(0.9120 0 0 1 740.30 549.30)" font-family="Liberation Serif" font-size="8.6" fill="#222" text-anchor="start" stroke="#222" stroke-width="0.12">9480 Pool Service/Monteure</text>
<rect x="729.10" y="553.50" width="5.80" height="9.30" fill="#000080"/>
<text transform="matrix(0.9120 0 0 1 740.30 561.80)" font-family="Liberation Serif" font-size="8.6" fill="#222" text-anchor="start" stroke="#222" stroke-width="0.12">9520 Gebiet It,Fr,Marokko</text>
<rect x="729.10" y="566.00" width="5.80" height="9.30" fill="#008000"/>
<text transform="matrix(0.9120 0 0 1 740.30 574.30)" font-family="Liberation Serif" font-size="8.6" fill="#222" text-anchor="start" stroke="#222" stroke-width="0.12">9530 Gebiet Osteuropa</text>
<rect x="729.10" y="578.50" width="5.80" height="9.30" fill="#008080"/>
<text transform="matrix(0.9120 0 0 1 740.30 586.80)" font-family="Liberation Serif" font-size="8.6" fill="#222" text-anchor="start" stroke="#222" stroke-width="0.12">9550 Gebiet D,A,CH,B</text>
<rect x="365.30" y="597.00" width="477.20" height="25.50" fill="#f0f0f0"/>
<line x1="365.30" y1="597.20" x2="842.50" y2="597.20" stroke="#d8d8d8" stroke-width="0.8"/>
<rect x="365.30" y="597.50" width="42.70" height="25.00" fill="#ffffff"/>
<line x1="408.20" y1="597.50" x2="408.20" y2="622.50" stroke="#c8c8c8" stroke-width="1"/>
<line x1="740.60" y1="598.00" x2="740.60" y2="622.50" stroke="#c0c0c0" stroke-width="1"/>
<line x1="785.20" y1="598.00" x2="785.20" y2="622.50" stroke="#c0c0c0" stroke-width="1"/>
<line x1="830.60" y1="598.00" x2="830.60" y2="622.50" stroke="#c0c0c0" stroke-width="1"/>
<text transform="matrix(0.9500 0 0 1 370.00 613.40)" font-family="Liberation Sans" font-size="8.0" fill="#555" text-anchor="start" letter-spacing="0.397" stroke="#555" stroke-width="0.08">o-b-s</text>
<line x1="398.30" y1="598.00" x2="398.30" y2="621.70" stroke="#888" stroke-width="0.9"/>
<rect x="395.00" y="601.70" width="7.00" height="3.50" fill="#111"/>
<rect x="396.00" y="607.00" width="6.30" height="3.80" fill="#e01010"/>
<rect x="393.30" y="613.30" width="6.70" height="3.70" fill="#f0e020"/>
<text transform="matrix(0.7600 0 0 1 744.40 613.20)" font-family="Liberation Sans" font-size="8.3" fill="#111" text-anchor="start" letter-spacing="0.438" stroke="#111" stroke-width="0.1">15.10.2014</text>
<text transform="matrix(0.7600 0 0 1 827.32 613.20)" font-family="Liberation Sans" font-size="8.3" fill="#111" text-anchor="end" letter-spacing="0.425" stroke="#111" stroke-width="0.1">12:05</text>
<path d="M838.50 621.5 L841.5 618.50" stroke="#9aa" stroke-width="0.8"/>
<path d="M835.90 621.5 L841.5 615.90" stroke="#9aa" stroke-width="0.8"/>
<path d="M833.30 621.5 L841.5 613.30" stroke="#9aa" stroke-width="0.8"/>
</g>
</svg>
</body></html>
